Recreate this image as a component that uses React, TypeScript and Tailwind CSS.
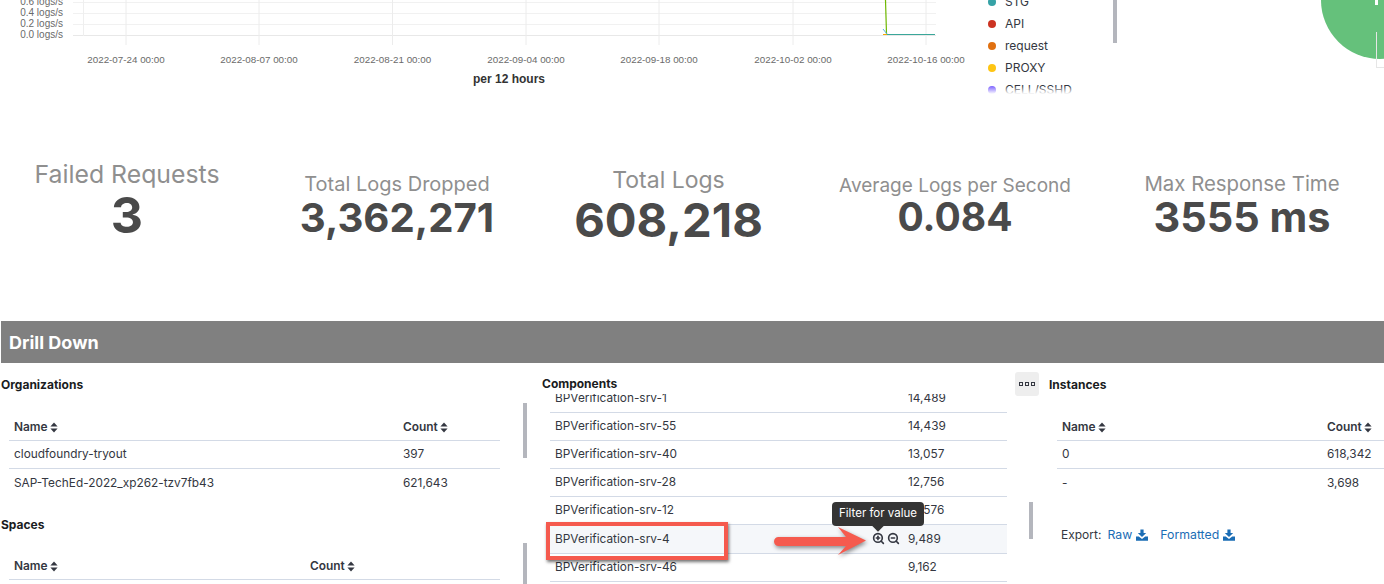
import { ZoomIn, ZoomOut } from 'lucide-react';

const xTicks = [
  { x: 126, label: '2022-07-24 00:00' },
  { x: 259, label: '2022-08-07 00:00' },
  { x: 392.5, label: '2022-08-21 00:00' },
  { x: 526, label: '2022-09-04 00:00' },
  { x: 659, label: '2022-09-18 00:00' },
  { x: 793, label: '2022-10-02 00:00' },
  { x: 926, label: '2022-10-16 00:00' },
];

const yTicks = [
  { y: 2, label: '0.6 logs/s' },
  { y: 13, label: '0.4 logs/s' },
  { y: 24, label: '0.2 logs/s' },
  { y: 35, label: '0.0 logs/s' },
];

const legend = [
  { name: 'STG', dot: 'bg-[#36a2a6]' },
  { name: 'API', dot: 'bg-[#cc3322]' },
  { name: 'request', dot: 'bg-[#e07010]' },
  { name: 'PROXY', dot: 'bg-[#fec514]' },
  { name: 'CELL/SSHD', dot: 'bg-[#7b61ff]' },
];

const stats = [
  { label: 'Failed Requests', value: '3', labelSize: 'text-[24.8px]', valueSize: 'text-[50px]', width: 'w-[254px]', gap: 'gap-[4px] -mt-[10px]' },
  { label: 'Total Logs Dropped', value: '3,362,271', labelSize: 'text-[20px]', valueSize: 'text-[40.2px]', width: 'w-[286px]', gap: 'gap-[4px] mt-[1px]' },
  { label: 'Total Logs', value: '608,218', labelSize: 'text-[23px]', valueSize: 'text-[47.2px]', width: 'w-[257px]', gap: 'gap-[4px]' },
  { label: 'Average Logs per Second', value: '0.084', labelSize: 'text-[19px]', valueSize: 'text-[39px]', width: 'w-[316px]', gap: 'gap-[2px]' },
  { label: 'Max Response Time', value: '3555 ms', labelSize: 'text-[20.4px]', valueSize: 'text-[41.4px]', width: 'w-[258px]', gap: 'gap-[3px]' },
];

const components = [
  ['BPVerification-srv-1', '14,489'],
  ['BPVerification-srv-55', '14,439'],
  ['BPVerification-srv-40', '13,057'],
  ['BPVerification-srv-28', '12,756'],
  ['BPVerification-srv-12', '12,576'],
  ['BPVerification-srv-4', '9,489'],
  ['BPVerification-srv-46', '9,162'],
];

function SortIcon() {
  return (
    <svg width="8" height="11" viewBox="0 0 8 11" className="ml-[2px] inline-block fill-[#343741]">
      <path d="M4 0.5 L7.6 4.6 L0.4 4.6 Z" />
      <path d="M4 10.5 L7.6 6.4 L0.4 6.4 Z" />
    </svg>
  );
}

function DownloadIcon() {
  return (
    <svg width="12" height="12" viewBox="0 0 12 12" className="ml-[4px] inline-block fill-[#1b6db5]">
      <path d="M4.4 0.5 H7.6 V4 H10.2 L6 8 L1.8 4 H4.4 Z" />
      <path d="M0 7.4 H2.8 L6 10 L9.2 7.4 H12 V11.8 H0 Z" />
    </svg>
  );
}

function TableHead({ countWidth }: { countWidth: string }) {
  return (
    <div className="flex h-[28px] items-center border-b border-[#d3dae6] pl-[5px] text-[11.9px] font-semibold text-[#343741]">
      <div className="flex-1">
        Name
        <SortIcon />
      </div>
      <div className={countWidth}>
        Count
        <SortIcon />
      </div>
    </div>
  );
}

function Row({ name, count, countWidth }: { name: string; count: string; countWidth: string }) {
  return (
    <div className="flex h-[28px] items-center border-b border-[#d3dae6] pl-[5px] pt-[1px] text-[11.85px] text-[#343741] last:border-b-0">
      <div className="flex-1">{name}</div>
      <div className={countWidth}>{count}</div>
    </div>
  );
}

function Scrollbar({ className }: { className: string }) {
  return <div className={`absolute w-[4px] bg-[#b4b6bd] ${className}`} />;
}

export default function App() {
  return (
    <div className="relative h-[584px] w-[1384px] overflow-hidden bg-white font-['Inter',sans-serif]">
      {/* chart strip */}
      <div className="flex h-[100px]">
        <svg width="970" height="100" viewBox="0 0 970 100" className="shrink-0">
          {yTicks.map((t) => (
            <g key={t.y}>
              <line x1="73" x2="936" y1={t.y + 0.5} y2={t.y + 0.5} stroke={t.y === 35 ? '#e8e8e8' : '#f1f1f1'} />
              <text x="63" y={t.y + 3} textAnchor="end" fontSize="10" fill="#6a6a6a" fontFamily="'Liberation Sans', sans-serif">
                {t.label}
              </text>
            </g>
          ))}
          <line x1="83.5" x2="83.5" y1="0" y2="36" stroke="#efefef" />
          {xTicks.map((t) => (
            <g key={t.x}>
              <line x1={t.x} x2={t.x} y1="0" y2="45" stroke="#ececec" />
              <text x={t.x} y="63" textAnchor="middle" fontSize="9.8" fill="#6a6a6a" fontFamily="'Liberation Sans', sans-serif">
                {t.label}
              </text>
            </g>
          ))}
          <path d="M885.5 0 L886.5 34" stroke="#6eb800" strokeWidth="1.2" fill="none" />
          <path d="M883 29 L887 34" stroke="#54b3e0" strokeWidth="1" fill="none" />
          <path d="M883 34.5 H887" stroke="#f5a700" strokeWidth="1" fill="none" />
          <path d="M887 34.5 H935" stroke="#3aa79a" strokeWidth="1" fill="none" />
          <text x="509" y="83" textAnchor="middle" fontSize="12" fontWeight="700" fill="#333" fontFamily="'Liberation Sans', sans-serif">
            per 12 hours
          </text>
        </svg>
        <div className="relative ml-[18px] h-[94px] w-[126px] overflow-hidden">
          <div className="-mt-[9px] flex flex-col">
            {legend.map((l) => (
              <div key={l.name} className="flex h-[22px] items-center text-[12px] text-[#343741]">
                <span className={`mr-[9px] h-[8px] w-[8px] rounded-full ${l.dot}`} />
                {l.name}
              </div>
            ))}
          </div>
          <div className="absolute bottom-0 left-0 h-[8px] w-full bg-gradient-to-b from-transparent to-white" />
        </div>
      </div>
      <Scrollbar className="left-[1113px] top-0 h-[43px]" />
      <div className="absolute left-[1321px] top-[-59px] h-[118px] w-[118px] rounded-full bg-[#65c17b]" />
      <div className="absolute left-[1375px] top-0 h-[5px] w-[3px] bg-white" />
      <div className="absolute left-[1376px] top-[32px] h-[36px] w-[20px] border-b border-l border-[#e6e6e6]" />

      {/* metrics */}
      <div className="flex h-[221px] items-center pb-[9px]">
        {stats.map((s) => (
          <div key={s.label} className={`flex flex-col items-center ${s.width} ${s.gap}`}>
            <div className={`${s.labelSize} leading-none text-[#8f8f8f]`}>{s.label}</div>
            <div className={`${s.valueSize} font-bold leading-none text-[#4a4a4a]`}>{s.value}</div>
          </div>
        ))}
      </div>

      {/* drill down */}
      <div className="ml-[1px] flex h-[42px] items-center bg-[#808080] pl-[8px] text-[18px] font-bold text-white">
        Drill Down
      </div>

      <div className="flex">
        <div className="ml-[1px] w-[541px] shrink-0">
          <div className="flex h-[42px] items-center pt-[1px] text-[12px] font-bold text-[#1a1c21]">Organizations</div>
          <div className="ml-[8px] w-[491px] pt-[8px]">
            <TableHead countWidth="w-[97px]" />
            <Row name="cloudfoundry-tryout" count="397" countWidth="w-[97px]" />
            <Row name="SAP-TechEd-2022_xp262-tzv7fb43" count="621,643" countWidth="w-[97px]" />
          </div>
          <div className="mt-[6px] flex h-[42px] items-center pt-[1px] text-[12px] font-bold text-[#1a1c21]">Spaces</div>
          <div className="ml-[8px] w-[491px] pt-[7px]">
            <TableHead countWidth="w-[190px]" />
          </div>
        </div>

        <div className="w-[473px] shrink-0">
          <div className="flex h-[31px] items-start pt-[15px] text-[12px] font-bold leading-none text-[#1a1c21]">Components</div>
          <div className="ml-[8px] h-[190px] w-[457px] overflow-hidden">
            <div className="-mt-[9px]">
              {components.map(([name, count]) => (
                <div
                  key={name}
                  className={`flex items-center border-b border-[#d3dae6] pl-[5px] pt-[1px] text-[11.85px] text-[#343741] ${name === 'BPVerification-srv-4' ? 'h-[29px] bg-[#f5f7fa]' : 'h-[28px]'}`}
                >
                  <div className="flex-1">{name}</div>
                  <div className="w-[99px]">{count}</div>
                </div>
              ))}
            </div>
          </div>
        </div>

        <div className="min-w-0 flex-1">
          <div className="flex h-[42px] items-center">
            <div className="flex h-[24px] w-[24px] items-center justify-center rounded-[3px] bg-[#eeeeee]">
              <span className="flex gap-[2px]">
                <i className="h-[4px] w-[4px] border border-[#343741]" />
                <i className="h-[4px] w-[4px] border border-[#343741]" />
                <i className="h-[4px] w-[4px] border border-[#343741]" />
              </span>
            </div>
            <div className="ml-[10px] pt-[1px] text-[12px] font-bold text-[#1a1c21]">Instances</div>
          </div>
          <div className="ml-[42px] w-[340px] pt-[8px]">
            <TableHead countWidth="w-[70px]" />
            <Row name="0" count="618,342" countWidth="w-[70px]" />
            <Row name="-" count="3,698" countWidth="w-[70px]" />
          </div>
          <div className="ml-[46px] mt-[29px] flex items-center text-[12px] text-[#343741]">
            <span>Export:</span>
            <a className="ml-[6px] flex items-center text-[12.3px] text-[#1b6db5]">
              Raw
              <DownloadIcon />
            </a>
            <a className="ml-[12px] flex items-center text-[12.3px] text-[#1b6db5]">
              Formatted
              <DownloadIcon />
            </a>
          </div>
        </div>
      </div>

      <Scrollbar className="left-[523px] top-[403px] h-[55px]" />
      <Scrollbar className="left-[523px] top-[543px] h-[41px]" />
      <Scrollbar className="left-[1029px] top-[502px] h-[37px]" />

      {/* hover actions and screenshot annotation */}
      <div className="absolute left-[872px] top-[532px] flex gap-[2px] text-[#343741]">
        <ZoomIn size={13} strokeWidth={3} />
        <ZoomOut size={13} strokeWidth={3} />
      </div>
      <div className="absolute left-[832px] top-[502px] flex h-[24px] w-[92px] items-center justify-center rounded-[4px] bg-[#343434] text-[11.5px] text-white">
        Filter for value
        <div className="absolute -bottom-[4px] left-[42px] h-[8px] w-[8px] rotate-45 bg-[#343434]" />
      </div>
      <div className="absolute left-[546px] top-[522px] h-[38px] w-[182px] border-[4px] border-[#f55a4e] shadow-[1px_2px_3px_rgba(0,0,0,0.55)]" />
      <svg width="110" height="44" viewBox="0 0 110 44" className="absolute left-[770px] top-[519px] drop-shadow-[1px_2px_2px_rgba(0,0,0,0.45)]">
        <path d="M8.5 18 H76 L68 8 L96 21.5 L68 36 L76 27 H8.5 A4.5 4.5 0 0 1 8.5 18 Z" fill="#f55a4e" />
      </svg>
    </div>
  );
}
